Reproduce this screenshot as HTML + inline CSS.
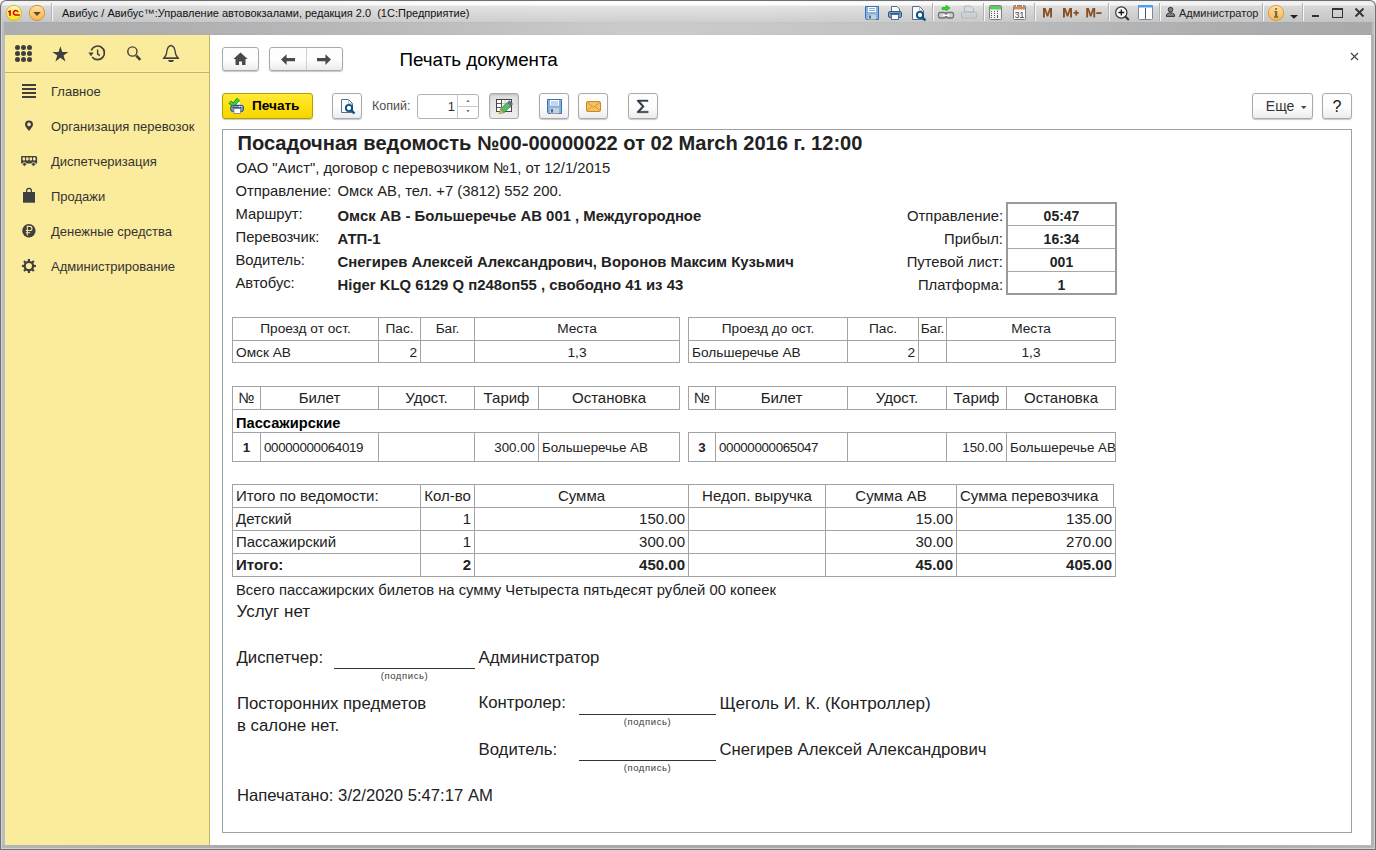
<!DOCTYPE html><html><head><meta charset="utf-8"><style>
*{margin:0;padding:0;box-sizing:border-box}
html,body{width:1376px;height:850px;overflow:hidden;background:#fff}
body{position:relative;font-family:"Liberation Sans",sans-serif;color:#000}
.t{position:absolute;white-space:pre;line-height:1}
.r{position:absolute}
.btn{position:absolute;border:1px solid #a9a9a9;border-radius:3px;background:linear-gradient(#fefefe,#fdfdfd 55%,#ececec);box-shadow:0 1px 1px rgba(0,0,0,0.22)}
</style></head><body><div class="r" style="left:0px;top:0px;width:1376px;height:850px;background:#707070;border-radius:6px 6px 0 0;"></div><div class="r" style="left:1px;top:1px;width:1374px;height:848px;background:#d2d2d4;border-radius:5px 5px 0 0;"></div><div class="r" style="left:2px;top:22px;width:1372px;height:826px;background:#bdbec1;"></div><div class="r" style="left:2px;top:1px;width:1372px;height:21px;border-radius:5px 5px 0 0;background:linear-gradient(90deg,rgba(40,44,54,.06) 0%,rgba(40,44,54,.04) 15%,rgba(0,0,0,0) 40%,rgba(0,0,0,0) 55%,rgba(40,44,54,.03) 70%,rgba(40,44,54,.07) 100%),linear-gradient(#f6f6f6 0px,#ffffff 1px,#ffffff 4px,#e4e4e4 5px,#d9d9d9 13px,#cfcfcf 21px);"></div><div class="r" style="left:4px;top:22px;width:1368px;height:13px;background:linear-gradient(90deg,rgba(40,44,54,.18) 0%,rgba(40,44,54,.17) 12%,rgba(40,44,54,.10) 28%,rgba(0,0,0,0) 45%,rgba(0,0,0,0) 50%,rgba(40,44,54,.05) 66%,rgba(40,44,54,.18) 89%,rgba(40,44,54,.21) 100%),linear-gradient(#c6c6c6 0px,#cbcbcb 2px,#cacaca 12px,#c4c4c4 13px);"></div><div class="r" style="left:1px;top:22px;width:1px;height:827px;background:#d4d4d4;"></div><div class="r" style="left:1374px;top:22px;width:1px;height:827px;background:#d0d0d0;"></div><div class="r" style="left:1px;top:848px;width:1374px;height:1px;background:#d0d0d2;"></div><div class="r" style="left:2px;top:845px;width:1372px;height:3px;background:linear-gradient(90deg,#b4b5b8,#a9aaae 20%,#a9aaae 80%,#b4b5b8);"></div><div class="r" style="left:1371px;top:35px;width:3px;height:810px;background:#b2b3b6;"></div><div class="r" style="left:2px;top:35px;width:3px;height:810px;background:#bcbdc0;"></div><div class="r" style="left:5px;top:35px;width:205px;height:810px;background:#fbeb9c;"></div><div class="r" style="left:209px;top:35px;width:1px;height:810px;background:#c4b466;"></div><div class="r" style="left:210px;top:35px;width:1161px;height:810px;background:#fff;"></div><div class="r" style="left:5px;top:72px;width:204px;height:1px;background:#c4b466;"></div><div class="r" style="left:5px;top:71px;width:204px;height:1px;background:#fdf0a6;"></div><div class="r" style="left:5px;top:73px;width:204px;height:1px;background:#fdf0a6;"></div><div class="t" style="left:51px;top:84.80px;font-size:13px;color:#333;">Главное</div><div class="t" style="left:51px;top:119.80px;font-size:13px;color:#333;">Организация перевозок</div><div class="t" style="left:51px;top:154.80px;font-size:13px;color:#333;">Диспетчеризация</div><div class="t" style="left:51px;top:189.80px;font-size:13px;color:#333;">Продажи</div><div class="t" style="left:51px;top:224.80px;font-size:13px;color:#333;">Денежные средства</div><div class="t" style="left:51px;top:259.80px;font-size:13px;color:#333;">Администрирование</div><div class="t" style="left:62px;top:8.49px;font-size:11px;color:#111;">Авибус / Авибус™:Управление автовокзалами, редакция 2.0  (1С:Предприятие)</div><div class="btn" style="left:222px;top:47px;width:37px;height:24px"></div><div class="btn" style="left:269px;top:47px;width:74px;height:24px"></div><div class="r" style="left:306px;top:48px;width:1px;height:22px;background:#d0d0d0;"></div><div class="t" style="left:399.5px;top:51.39px;font-size:18.8px;">Печать документа</div><div class="btn" style="left:222px;top:93px;width:91px;height:26px;border-color:#b3a000;background:linear-gradient(#ffe83a,#ffe012 50%,#f5d500)"></div><div class="t" style="left:252px;top:99.39px;font-size:13.6px;font-weight:bold;">Печать</div><div class="btn" style="left:332px;top:93px;width:30px;height:26px"></div><div class="t" style="left:372px;top:100.22px;font-size:12.5px;color:#4d4d4d;">Копий:</div><div class="r" style="left:417px;top:94px;width:62px;height:25px;border:1px solid #b4b4b4;border-radius:3px;background:#fff;"></div><div class="r" style="left:457px;top:95px;width:1px;height:23px;background:#c8c8c8;"></div><div class="r" style="left:458px;top:106px;width:20px;height:1px;background:#c8c8c8;"></div><div class="t" style="left:440px;top:100.00px;font-size:13px;color:#333;width:15px;text-align:right;">1</div><div class="btn" style="left:489px;top:93px;width:30px;height:26px;background:linear-gradient(#dcdcdc,#e8e8e8 60%,#efefef);box-shadow:inset 0 1px 2px rgba(0,0,0,.15)"></div><div class="btn" style="left:539px;top:93px;width:30px;height:26px"></div><div class="btn" style="left:578px;top:93px;width:30px;height:26px"></div><div class="btn" style="left:628px;top:93px;width:30px;height:26px"></div><div class="btn" style="left:1252px;top:93px;width:61px;height:26px"></div><div class="t" style="left:1265.8px;top:99.15px;font-size:14px;color:#333;">Еще</div><div class="btn" style="left:1322px;top:93px;width:30px;height:26px"></div><div class="t" style="left:1322px;top:98.66px;font-size:16px;color:#111;width:30px;text-align:center;">?</div><div class="r" style="left:222px;top:129px;width:1130px;height:704px;border:1px solid #a0a0a0;"></div><svg class="r" style="left:0;top:0" width="1376" height="24" viewBox="0 0 1376 24"><defs><linearGradient id="g1c" x1="0" y1="0" x2="0" y2="1"><stop offset="0" stop-color="#fffcc0"/><stop offset="1" stop-color="#ffe000"/></linearGradient><linearGradient id="gor" x1="0" y1="0" x2="0" y2="1"><stop offset="0" stop-color="#ffe0a8"/><stop offset="1" stop-color="#ffb545"/></linearGradient></defs><circle cx="13.9" cy="12.9" r="7.6" fill="url(#g1c)" stroke="#cdb848" stroke-width="1"/><path d="M8 11.2 L10 10.2 L10.9 10.2 L10.9 15.8 L9.2 15.8 L9.2 12 L8 12.4Z" fill="#e00000"/><path d="M18.9 11.6 A3.3 3 0 1 0 15.2 15.8 L19.7 15.8 L19.7 14.3 L15.5 14.3 A1.6 1.5 0 1 1 17.3 12.2Z" fill="#e00000"/><circle cx="37" cy="12.9" r="7.6" fill="url(#gor)" stroke="#c09a40" stroke-width="1"/><path d="M33.2 12 L40.8 12 L37 16Z" fill="#5a4a30"/><rect x="51" y="3" width="1" height="18" fill="#b2b2b2"/><rect x="52" y="3" width="1" height="18" fill="#f8f8f8"/><rect x="932" y="3" width="1" height="18" fill="#b2b2b2"/><rect x="933" y="3" width="1" height="18" fill="#f8f8f8"/><rect x="983" y="3" width="1" height="18" fill="#b2b2b2"/><rect x="984" y="3" width="1" height="18" fill="#f8f8f8"/><rect x="1034" y="3" width="1" height="18" fill="#b2b2b2"/><rect x="1035" y="3" width="1" height="18" fill="#f8f8f8"/><rect x="1108" y="3" width="1" height="18" fill="#b2b2b2"/><rect x="1109" y="3" width="1" height="18" fill="#f8f8f8"/><rect x="1159" y="3" width="1" height="18" fill="#b2b2b2"/><rect x="1160" y="3" width="1" height="18" fill="#f8f8f8"/><rect x="1262" y="3" width="1" height="18" fill="#b2b2b2"/><rect x="1263" y="3" width="1" height="18" fill="#f8f8f8"/><rect x="1302" y="3" width="1" height="18" fill="#b2b2b2"/><rect x="1303" y="3" width="1" height="18" fill="#f8f8f8"/><path d="M865.5 6.5 H878.5 V19.5 H866.5 L865.5 18.5Z" fill="#86b0e6" stroke="#3d6eae"/><rect x="868" y="7" width="8" height="5" fill="#fff"/><rect x="869" y="8" width="6" height="1" fill="#8aa8d0"/><rect x="869" y="10" width="6" height="1" fill="#8aa8d0"/><rect x="868" y="14.5" width="8" height="5" fill="#c8d0d0"/><rect x="869" y="15.5" width="2" height="3" fill="#3d6eae"/><path d="M891.5 6.5 H897 L899.5 9 V12 H891.5Z" fill="#fff" stroke="#5c6e86"/><rect x="888.5" y="11.5" width="13" height="6" rx="1.5" fill="#7aa0d0" stroke="#2e5a8a"/><rect x="890" y="13" width="10" height="1" fill="#2e5a8a"/><rect x="891.5" y="14.5" width="7" height="5" fill="#fff" stroke="#5c6e86"/><path d="M912.5 6.5 H919.5 L923.5 10.5 V19.5 H912.5Z" fill="#fafafa" stroke="#5a7088"/><path d="M919.5 6.5 V10.5 H923.5" fill="none" stroke="#8a9aaa" stroke-width="0.6"/><circle cx="920" cy="15" r="3.1" fill="#fff" stroke="#0b4f84" stroke-width="1.9"/><path d="M922.3 17.4 L925.5 20.5" stroke="#0b4f84" stroke-width="2.4"/><path d="M942 7.5 H946 V5.2 L950 8 L946 10.8 V9.5 H942Z" fill="#22dd22" stroke="#10a010" stroke-width="0.6"/><rect x="938.5" y="12.5" width="7.5" height="5.5" rx="2" fill="none" stroke="#6c7480" stroke-width="1.3"/><rect x="946" y="12.5" width="7.5" height="5.5" rx="2" fill="none" stroke="#6c7480" stroke-width="1.3"/><rect x="943" y="14.6" width="6" height="1.4" fill="#fff"/><path d="M964.5 6 H970.5 L973.5 9 V12 H964.5Z" fill="#d8dade" stroke="#b0b8c4"/><rect x="961.5" y="12" width="15" height="6" rx="2" fill="none" stroke="#b0b8c4" stroke-width="1.2"/><rect x="964" y="14.5" width="10" height="1.5" fill="#c4ccd6"/><rect x="989.5" y="5.5" width="12" height="14" rx="1" fill="#f4f4f4" stroke="#7a8088"/><rect x="990" y="6" width="11" height="3.5" fill="#5ccc5c"/><g fill="#555"><rect x="991" y="11" width="1" height="1"/><rect x="994" y="11" width="1" height="1"/><rect x="991" y="13" width="1" height="1"/><rect x="994" y="13" width="1" height="1"/><rect x="997" y="13" width="1" height="1"/><rect x="991" y="15" width="1" height="1"/><rect x="994" y="15" width="1" height="1"/><rect x="997" y="15" width="1" height="1"/><rect x="991" y="17" width="1" height="1"/><rect x="994" y="17" width="1" height="1"/><rect x="997" y="16" width="1" height="2"/></g><rect x="997" y="10.5" width="1" height="1.5" fill="#e02020"/><rect x="1013.5" y="5.5" width="12" height="14" rx="1" fill="#fafafa" stroke="#7a8088"/><rect x="1014" y="6" width="11" height="3.5" fill="#d08a58"/><rect x="1016" y="4.5" width="1" height="2" fill="#fff"/><rect x="1022" y="4.5" width="1" height="2" fill="#fff"/><text x="1019.5" y="18" font-family="Liberation Sans" font-size="8.5" text-anchor="middle" fill="#333">31</text><path d="M1043 17.6 V8 H1045.6 L1047.5 13.4 L1049.4 8 H1052.0 V17.6 H1050.1 V11 L1048.3 16.4 H1046.7 L1044.9 11 V17.6Z M1063 17.6 V8 H1065.6 L1067.5 13.4 L1069.4 8 H1072.0 V17.6 H1070.1 V11 L1068.3 16.4 H1066.7 L1064.9 11 V17.6Z M1086.2 17.6 V8 H1088.8 L1090.7 13.4 L1092.6 8 H1095.2 V17.6 H1093.3 V11 L1091.5 16.4 H1089.9 L1088.1 11 V17.6Z " fill="#8a5024"/><path d="M1073.6 12.9 H1078.8 M1076.2 10.3 V15.6" stroke="#8a5024" stroke-width="1.8"/><rect x="1096.3" y="12.2" width="5.2" height="1.8" fill="#8a5024"/><circle cx="1121.3" cy="12.5" r="5.6" fill="#fafafa" stroke="#333" stroke-width="1.2"/><path d="M1118.4 12.5 H1124.2 M1121.3 9.6 V15.4" stroke="#111" stroke-width="1.3"/><path d="M1125.3 16.5 L1128.8 20" stroke="#333" stroke-width="2"/><rect x="1138.5" y="5.5" width="14" height="14" rx="1" fill="#fff" stroke="#7a8a9a"/><rect x="1138" y="5" width="15" height="2.5" rx="1" fill="#4aa0f0"/><rect x="1145" y="8" width="1" height="11" fill="#555"/><circle cx="1170.5" cy="9.6" r="2.3" fill="#808080" stroke="#333" stroke-width="1"/><path d="M1166.3 16.4 Q1166.3 12.8 1170.5 12.8 Q1174.7 12.8 1174.7 16.4Z" fill="#808080" stroke="#333" stroke-width="1"/><circle cx="1276" cy="12.9" r="7.6" fill="url(#gor)" stroke="#c9a030" stroke-width="0.9"/><rect x="1275" y="8" width="2.2" height="1.8" rx="0.8" fill="#6a6a60"/><path d="M1274.3 11 H1277.2 V16.2 H1278.2 V17.8 H1274 V16.2 H1275 V12.3 H1274.3Z" fill="#6a6a60"/><path d="M1290 15 H1298 L1294 18.8Z" fill="#222"/><rect x="1312" y="15" width="7" height="2" fill="#333"/><rect x="1332.5" y="8.5" width="10" height="9" fill="none" stroke="#333"/><rect x="1332" y="8" width="11" height="2" fill="#333"/><path d="M1355.5 8.5 L1363.5 16.5 M1363.5 8.5 L1355.5 16.5" stroke="#333" stroke-width="1.8"/></svg><div class="t" style="left:1179px;top:8.19px;font-size:11px;color:#222;">Администратор</div><svg class="r" style="left:5px;top:35px" width="205" height="250" viewBox="5 35 205 250"><g fill="#3f3f3f"><circle cx="17.5" cy="47.5" r="2.5"/><circle cx="17.5" cy="53.5" r="2.5"/><circle cx="17.5" cy="59.5" r="2.5"/><circle cx="23.5" cy="47.5" r="2.5"/><circle cx="23.5" cy="53.5" r="2.5"/><circle cx="23.5" cy="59.5" r="2.5"/><circle cx="29.5" cy="47.5" r="2.5"/><circle cx="29.5" cy="53.5" r="2.5"/><circle cx="29.5" cy="59.5" r="2.5"/><path d="M60.4 46.2 L62.3 51.9 L68.4 51.9 L63.5 55.5 L65.4 61.6 L60.4 57.8 L55.4 61.6 L57.3 55.5 L52.4 51.9 L58.5 51.9Z"/></g><path d="M91.2 50.5 A6.8 6.8 0 1 1 92.2 57" fill="none" stroke="#3f3f3f" stroke-width="1.7"/><path d="M88.4 52.6 L93.6 52.6 L91 56.2Z" fill="#3f3f3f"/><path d="M97.6 49.5 V53.8 L99.8 55.6" fill="none" stroke="#3f3f3f" stroke-width="1.4"/><circle cx="132.4" cy="51.5" r="4.6" fill="none" stroke="#3f3f3f" stroke-width="1.4"/><path d="M136.2 55.6 L140.4 59.9" stroke="#3f3f3f" stroke-width="2.6"/><path d="M170.9 45.5 C167 46 167 50 166.5 53.5 C166 56 164.5 57.5 163.8 58.2 H178.2 C177.5 57.5 176 56 175.5 53.5 C175 50 175 46 170.9 45.5Z" fill="none" stroke="#3f3f3f" stroke-width="1.3"/><rect x="163.3" y="57.6" width="15.4" height="1.4" fill="#3f3f3f"/><path d="M168.2 60 H173.8 A2.8 2 0 0 1 168.2 60Z" fill="#3f3f3f"/><g fill="#3f3f3f"><rect x="22" y="84" width="14" height="2"/><rect x="22" y="88" width="14" height="2"/><rect x="22" y="92" width="14" height="2"/><rect x="22" y="96" width="14" height="2"/></g><path d="M29 120.4 A4 4 0 0 1 33 124.4 C33 126.8 30.5 128.8 29 131 C27.5 128.8 25 126.8 25 124.4 A4 4 0 0 1 29 120.4Z M29 122.6 A1.8 1.8 0 1 0 29.01 122.6Z" fill="#3f3f3f" fill-rule="evenodd"/><path d="M21.6 156 H35.6 A1.5 1.5 0 0 1 37.1 157.5 V163.6 H21.1 V156.5Z" fill="#3f3f3f"/><g fill="#fbeb9c"><rect x="22.6" y="157.3" width="2.5" height="3.2" rx="0.8"/><rect x="26.1" y="157.3" width="2.5" height="3.2" rx="0.8"/><rect x="29.6" y="157.3" width="2.5" height="3.2" rx="0.8"/><rect x="33.1" y="157.3" width="2.5" height="3.2" rx="0.8"/></g><circle cx="24.5" cy="164.3" r="1.9" fill="#3f3f3f" stroke="#fbeb9c" stroke-width="0.8"/><circle cx="33.5" cy="164.3" r="1.9" fill="#3f3f3f" stroke="#fbeb9c" stroke-width="0.8"/><rect x="23" y="192" width="12" height="10.7" fill="#3f3f3f"/><path d="M26.6 194.5 V191 A2.4 2.6 0 0 1 31.4 191 V194.5" fill="none" stroke="#3f3f3f" stroke-width="1.2"/><circle cx="28.9" cy="230.7" r="6.7" fill="#3f3f3f"/><path d="M27.3 235.6 V226.4 H29.9 A2 2 0 0 1 29.9 230.5 H25.8 M25.8 232.7 H30.2" fill="none" stroke="#fbeb9c" stroke-width="1.1"/><g transform="translate(28.9 266)"><circle r="4.2" fill="none" stroke="#3f3f3f" stroke-width="2.2"/><rect x="-1.1" y="-7" width="2.2" height="2.8" fill="#3f3f3f" transform="rotate(0)"/><rect x="-1.1" y="-7" width="2.2" height="2.8" fill="#3f3f3f" transform="rotate(45)"/><rect x="-1.1" y="-7" width="2.2" height="2.8" fill="#3f3f3f" transform="rotate(90)"/><rect x="-1.1" y="-7" width="2.2" height="2.8" fill="#3f3f3f" transform="rotate(135)"/><rect x="-1.1" y="-7" width="2.2" height="2.8" fill="#3f3f3f" transform="rotate(180)"/><rect x="-1.1" y="-7" width="2.2" height="2.8" fill="#3f3f3f" transform="rotate(225)"/><rect x="-1.1" y="-7" width="2.2" height="2.8" fill="#3f3f3f" transform="rotate(270)"/><rect x="-1.1" y="-7" width="2.2" height="2.8" fill="#3f3f3f" transform="rotate(315)"/></g></svg><svg class="r" style="left:210px;top:35px" width="500" height="90" viewBox="210 35 500 90"><path d="M240.5 52.6 L247.6 59 H245.5 V65 H242 V61.5 H239 V65 H235.5 V59 H233.4Z" fill="#4a4a4a"/><path d="M281 59.6 L286.6 54.2 V57.9 H295 V61.3 H286.6 V65 Z" fill="#4a4a4a"/><path d="M331 59.6 L325.4 54.2 V57.9 H317 V61.3 H325.4 V65 Z" fill="#4a4a4a"/><path d="M236 105 V101.3 H239 L240.8 103 V105Z" fill="#fff" stroke="#999" stroke-width="0.5"/><path d="M229.6 101.8 L233.4 105.2 L238.4 99" fill="none" stroke="#177a10" stroke-width="3.6" stroke-linejoin="miter"/><path d="M229.6 101.8 L233.4 105.2 L238.4 99" fill="none" stroke="#46e024" stroke-width="2"/><rect x="230.8" y="105.4" width="12.6" height="6" rx="1.6" fill="#7d9ccc" stroke="#2b4c74"/><rect x="232.3" y="107.2" width="9.5" height="0.9" fill="#2b4c74"/><circle cx="239.6" cy="106.6" r="0.6" fill="#fff"/><circle cx="241.6" cy="106.6" r="0.6" fill="#fff"/><rect x="233.9" y="108.6" width="6.6" height="5" fill="#fff" stroke="#607080" stroke-width="0.7"/><path d="M341.5 99.5 H348.5 L352.5 103.5 V112.5 H341.5Z" fill="#fafafa" stroke="#5a7088"/><path d="M348.5 99.5 V103.5 H352.5" fill="none" stroke="#8a9aaa" stroke-width="0.6"/><circle cx="349" cy="108" r="3.1" fill="#fff" stroke="#0b4f84" stroke-width="1.9"/><path d="M351.3 110.4 L354.5 113.5" stroke="#0b4f84" stroke-width="2.4"/><path d="M466.3 101.8 H469.7 L468 100Z M466.3 110.2 H469.7 L468 112Z" fill="#444"/><rect x="496.5" y="99.5" width="15" height="12" fill="#fff" stroke="#444"/><path d="M497 103.5 H511 M497 107.5 H511 M505 100 V111" stroke="#c4c4c4" stroke-width="1"/><path d="M497 103.5 H502 M497 107.5 H501 M501.5 100 V107" stroke="#555" stroke-width="1"/><path d="M500.3 109 L507.3 102.4 L510.9 106.2 L503.9 112.8Z" fill="#52c062" stroke="#1f6a2a" stroke-width="0.6"/><path d="M507.3 102.4 L509.5 100.3 L513.1 104.1 L510.9 106.2Z" fill="#5e6e80"/><path d="M500.3 109 L499 113.8 L503.9 112.8Z" fill="#e2b468" stroke="#8a6a30" stroke-width="0.4"/><path d="M547.5 99.5 H561.5 V113.5 H548.5 L547.5 112.5Z" fill="#86b0e6" stroke="#3d6eae"/><rect x="550" y="100" width="9" height="5.5" fill="#fff"/><rect x="551" y="101.5" width="7" height="1" fill="#8aa8d0"/><rect x="551" y="103.5" width="7" height="1" fill="#8aa8d0"/><rect x="550" y="108" width="9" height="5.5" fill="#c8d0d0"/><rect x="551" y="109" width="2" height="3.5" fill="#3d6eae"/><rect x="586.5" y="101.5" width="14" height="10" rx="1.2" fill="#f5c060" stroke="#c88a20"/><path d="M587 102 L593.5 107.5 L600 102 M587 111 L591.5 106.5 M600 111 L595.5 106.5" fill="none" stroke="#c88a20" stroke-width="0.8"/><path d="M637.3 100 H648 V101.6 H640 L644.3 106.4 L640 111.2 H648.2 V112.8 H637.1 V111.7 L642 106.4 L637.1 101.1Z" fill="#2a3a4a" stroke="#2a3a4a" stroke-width="0.4"/></svg><svg class="r" style="left:1290px;top:45px" width="75" height="70" viewBox="1290 45 75 70"><path d="M1301 106 H1306.5 L1303.75 109Z" fill="#444"/><path d="M1351 53 L1358 60 M1358 53 L1351 60" stroke="#444" stroke-width="1.2"/></svg><div class="t" style="left:237.5px;top:132.59px;font-size:20.1px;font-weight:bold;color:#222;">Посадочная ведомость №00-00000022 от 02 March 2016 г. 12:00</div><div class="t" style="left:236px;top:161.27px;font-size:14.8px;color:#222;">ОАО &quot;Аист&quot;, договор с перевозчиком №1, от 12/1/2015</div><div class="t" style="left:235.5px;top:183.97px;font-size:14.8px;color:#222;">Отправление:</div><div class="t" style="left:337.5px;top:183.97px;font-size:14.8px;color:#222;">Омск АВ, тел. +7 (3812) 552 200.</div><div class="t" style="left:235.5px;top:206.57px;font-size:14.8px;color:#222;">Маршрут:</div><div class="t" style="left:337.5px;top:208.99px;font-size:14.9px;font-weight:bold;color:#222;">Омск АВ - Большеречье АВ 001 , Междугородное</div><div class="t" style="left:235.5px;top:230.47px;font-size:14.8px;color:#222;">Перевозчик:</div><div class="t" style="left:337.5px;top:232.19px;font-size:14.9px;font-weight:bold;color:#222;">АТП-1</div><div class="t" style="left:235.5px;top:253.37px;font-size:14.8px;color:#222;">Водитель:</div><div class="t" style="left:337.5px;top:254.79px;font-size:14.9px;font-weight:bold;color:#222;">Снегирев Алексей Александрович, Воронов Максим Кузьмич</div><div class="t" style="left:235.5px;top:275.87px;font-size:14.8px;color:#222;">Автобус:</div><div class="t" style="left:337.5px;top:277.89px;font-size:14.9px;font-weight:bold;color:#222;">Higer KLQ 6129 Q п248оп55 , свободно 41 из 43</div><div class="r" style="left:1006px;top:202px;width:111px;height:93px;border:2px solid #9a9a9a;"></div><div class="r" style="left:1008px;top:225px;width:107px;height:1px;background:#a8a8a8;"></div><div class="r" style="left:1008px;top:248px;width:107px;height:1px;background:#a8a8a8;"></div><div class="r" style="left:1008px;top:271px;width:107px;height:1px;background:#a8a8a8;"></div><div class="t" style="left:800px;top:208.77px;font-size:14.8px;color:#222;width:203px;text-align:right;">Отправление:</div><div class="t" style="left:1008px;top:208.75px;font-size:14px;font-weight:bold;color:#222;width:107px;text-align:center;">05:47</div><div class="t" style="left:800px;top:231.77px;font-size:14.8px;color:#222;width:203px;text-align:right;">Прибыл:</div><div class="t" style="left:1008px;top:231.75px;font-size:14px;font-weight:bold;color:#222;width:107px;text-align:center;">16:34</div><div class="t" style="left:800px;top:254.57px;font-size:14.8px;color:#222;width:203px;text-align:right;">Путевой лист:</div><div class="t" style="left:1008px;top:254.55px;font-size:14px;font-weight:bold;color:#222;width:107px;text-align:center;">001</div><div class="t" style="left:800px;top:277.57px;font-size:14.8px;color:#222;width:203px;text-align:right;">Платформа:</div><div class="t" style="left:1008px;top:277.55px;font-size:14px;font-weight:bold;color:#222;width:107px;text-align:center;">1</div><div class="r" style="left:232px;top:317px;width:448px;height:1px;background:#a3a3a3;"></div><div class="r" style="left:232px;top:340px;width:448px;height:1px;background:#a3a3a3;"></div><div class="r" style="left:232px;top:362px;width:448px;height:1px;background:#a3a3a3;"></div><div class="r" style="left:232px;top:317px;width:1px;height:46px;background:#a3a3a3;"></div><div class="r" style="left:378px;top:317px;width:1px;height:46px;background:#a3a3a3;"></div><div class="r" style="left:420px;top:317px;width:1px;height:46px;background:#a3a3a3;"></div><div class="r" style="left:474px;top:317px;width:1px;height:46px;background:#a3a3a3;"></div><div class="r" style="left:679px;top:317px;width:1px;height:46px;background:#a3a3a3;"></div><div class="r" style="left:688px;top:317px;width:428px;height:1px;background:#a3a3a3;"></div><div class="r" style="left:688px;top:340px;width:428px;height:1px;background:#a3a3a3;"></div><div class="r" style="left:688px;top:362px;width:428px;height:1px;background:#a3a3a3;"></div><div class="r" style="left:688px;top:317px;width:1px;height:46px;background:#a3a3a3;"></div><div class="r" style="left:847px;top:317px;width:1px;height:46px;background:#a3a3a3;"></div><div class="r" style="left:918px;top:317px;width:1px;height:46px;background:#a3a3a3;"></div><div class="r" style="left:946px;top:317px;width:1px;height:46px;background:#a3a3a3;"></div><div class="r" style="left:1115px;top:317px;width:1px;height:46px;background:#a3a3a3;"></div><div class="t" style="left:233px;top:322.40px;font-size:13.7px;color:#222;width:145px;text-align:center;">Проезд от ост.</div><div class="t" style="left:379px;top:322.40px;font-size:13.7px;color:#222;width:41px;text-align:center;">Пас.</div><div class="t" style="left:421px;top:322.40px;font-size:13.7px;color:#222;width:53px;text-align:center;">Баг.</div><div class="t" style="left:475px;top:322.40px;font-size:13.7px;color:#222;width:204px;text-align:center;">Места</div><div class="t" style="left:236px;top:346.00px;font-size:13.7px;color:#222;">Омск АВ</div><div class="t" style="left:379px;top:346.00px;font-size:13.7px;color:#222;width:38px;text-align:right;">2</div><div class="t" style="left:475px;top:346.00px;font-size:13.7px;color:#222;width:204px;text-align:center;">1,3</div><div class="t" style="left:689px;top:322.40px;font-size:13.7px;color:#222;width:158px;text-align:center;">Проезд до ост.</div><div class="t" style="left:848px;top:322.40px;font-size:13.7px;color:#222;width:70px;text-align:center;">Пас.</div><div class="t" style="left:919px;top:322.40px;font-size:13.7px;color:#222;width:27px;text-align:center;">Баг.</div><div class="t" style="left:947px;top:322.40px;font-size:13.7px;color:#222;width:168px;text-align:center;">Места</div><div class="t" style="left:692px;top:346.00px;font-size:13.7px;color:#222;">Большеречье АВ</div><div class="t" style="left:848px;top:346.00px;font-size:13.7px;color:#222;width:67px;text-align:right;">2</div><div class="t" style="left:947px;top:346.00px;font-size:13.7px;color:#222;width:168px;text-align:center;">1,3</div><div class="r" style="left:232px;top:386px;width:448px;height:1px;background:#a3a3a3;"></div><div class="r" style="left:232px;top:409px;width:448px;height:1px;background:#a3a3a3;"></div><div class="r" style="left:232px;top:386px;width:1px;height:24px;background:#a3a3a3;"></div><div class="r" style="left:260px;top:386px;width:1px;height:24px;background:#a3a3a3;"></div><div class="r" style="left:378px;top:386px;width:1px;height:24px;background:#a3a3a3;"></div><div class="r" style="left:474px;top:386px;width:1px;height:24px;background:#a3a3a3;"></div><div class="r" style="left:538px;top:386px;width:1px;height:24px;background:#a3a3a3;"></div><div class="r" style="left:679px;top:386px;width:1px;height:24px;background:#a3a3a3;"></div><div class="r" style="left:232px;top:432px;width:448px;height:1px;background:#a3a3a3;"></div><div class="r" style="left:232px;top:461px;width:448px;height:1px;background:#a3a3a3;"></div><div class="r" style="left:232px;top:432px;width:1px;height:30px;background:#a3a3a3;"></div><div class="r" style="left:260px;top:432px;width:1px;height:30px;background:#a3a3a3;"></div><div class="r" style="left:378px;top:432px;width:1px;height:30px;background:#a3a3a3;"></div><div class="r" style="left:474px;top:432px;width:1px;height:30px;background:#a3a3a3;"></div><div class="r" style="left:538px;top:432px;width:1px;height:30px;background:#a3a3a3;"></div><div class="r" style="left:679px;top:432px;width:1px;height:30px;background:#a3a3a3;"></div><div class="t" style="left:233px;top:390.30px;font-size:15px;color:#222;width:27px;text-align:center;">№</div><div class="t" style="left:261px;top:390.30px;font-size:15px;color:#222;width:117px;text-align:center;">Билет</div><div class="t" style="left:379px;top:390.30px;font-size:15px;color:#222;width:95px;text-align:center;">Удост.</div><div class="t" style="left:475px;top:390.30px;font-size:15px;color:#222;width:63px;text-align:center;">Тариф</div><div class="t" style="left:539px;top:390.30px;font-size:15px;color:#222;width:140px;text-align:center;">Остановка</div><div class="r" style="left:688px;top:386px;width:428px;height:1px;background:#a3a3a3;"></div><div class="r" style="left:688px;top:409px;width:428px;height:1px;background:#a3a3a3;"></div><div class="r" style="left:688px;top:386px;width:1px;height:24px;background:#a3a3a3;"></div><div class="r" style="left:715px;top:386px;width:1px;height:24px;background:#a3a3a3;"></div><div class="r" style="left:847px;top:386px;width:1px;height:24px;background:#a3a3a3;"></div><div class="r" style="left:946px;top:386px;width:1px;height:24px;background:#a3a3a3;"></div><div class="r" style="left:1006px;top:386px;width:1px;height:24px;background:#a3a3a3;"></div><div class="r" style="left:1115px;top:386px;width:1px;height:24px;background:#a3a3a3;"></div><div class="r" style="left:688px;top:432px;width:428px;height:1px;background:#a3a3a3;"></div><div class="r" style="left:688px;top:461px;width:428px;height:1px;background:#a3a3a3;"></div><div class="r" style="left:688px;top:432px;width:1px;height:30px;background:#a3a3a3;"></div><div class="r" style="left:715px;top:432px;width:1px;height:30px;background:#a3a3a3;"></div><div class="r" style="left:847px;top:432px;width:1px;height:30px;background:#a3a3a3;"></div><div class="r" style="left:946px;top:432px;width:1px;height:30px;background:#a3a3a3;"></div><div class="r" style="left:1006px;top:432px;width:1px;height:30px;background:#a3a3a3;"></div><div class="r" style="left:1115px;top:432px;width:1px;height:30px;background:#a3a3a3;"></div><div class="t" style="left:689px;top:390.30px;font-size:15px;color:#222;width:26px;text-align:center;">№</div><div class="t" style="left:716px;top:390.30px;font-size:15px;color:#222;width:131px;text-align:center;">Билет</div><div class="t" style="left:848px;top:390.30px;font-size:15px;color:#222;width:98px;text-align:center;">Удост.</div><div class="t" style="left:947px;top:390.30px;font-size:15px;color:#222;width:59px;text-align:center;">Тариф</div><div class="t" style="left:1007px;top:390.30px;font-size:15px;color:#222;width:108px;text-align:center;">Остановка</div><div class="r" style="left:232px;top:409px;width:1px;height:24px;background:#a3a3a3;"></div><div class="t" style="left:236px;top:415.88px;font-size:14.67px;font-weight:bold;">Пассажирские</div><div class="t" style="left:233px;top:440.92px;font-size:13.33px;font-weight:bold;color:#222;width:27px;text-align:center;">1</div><div class="t" style="left:264px;top:440.92px;font-size:13.33px;color:#222;letter-spacing:-0.33px;">00000000064019</div><div class="t" style="left:475px;top:440.92px;font-size:13.33px;color:#222;width:60px;text-align:right;">300.00</div><div class="t" style="left:542px;top:440.92px;font-size:13.33px;color:#222;">Большеречье АВ</div><div class="t" style="left:689px;top:440.92px;font-size:13.33px;font-weight:bold;color:#222;width:26px;text-align:center;">3</div><div class="t" style="left:719px;top:440.92px;font-size:13.33px;color:#222;letter-spacing:-0.33px;">00000000065047</div><div class="t" style="left:947px;top:440.92px;font-size:13.33px;color:#222;width:56px;text-align:right;">150.00</div><div class="t" style="left:1010px;top:440.92px;font-size:13.33px;color:#222;">Большеречье АВ</div><div class="r" style="left:232px;top:484px;width:882px;height:1px;background:#a3a3a3;"></div><div class="r" style="left:232px;top:507px;width:884px;height:1px;background:#a3a3a3;"></div><div class="r" style="left:232px;top:530px;width:884px;height:1px;background:#a3a3a3;"></div><div class="r" style="left:232px;top:553px;width:884px;height:1px;background:#a3a3a3;"></div><div class="r" style="left:232px;top:576px;width:884px;height:1px;background:#a3a3a3;"></div><div class="r" style="left:232px;top:484px;width:1px;height:93px;background:#a3a3a3;"></div><div class="r" style="left:420px;top:484px;width:1px;height:93px;background:#a3a3a3;"></div><div class="r" style="left:474px;top:484px;width:1px;height:93px;background:#a3a3a3;"></div><div class="r" style="left:688px;top:484px;width:1px;height:93px;background:#a3a3a3;"></div><div class="r" style="left:825px;top:484px;width:1px;height:93px;background:#a3a3a3;"></div><div class="r" style="left:956px;top:484px;width:1px;height:93px;background:#a3a3a3;"></div><div class="r" style="left:1113px;top:484px;width:1px;height:24px;background:#a3a3a3;"></div><div class="r" style="left:1115px;top:507px;width:1px;height:70px;background:#a3a3a3;"></div><div class="t" style="left:236px;top:488.40px;font-size:15px;color:#222;">Итого по ведомости:</div><div class="t" style="left:421px;top:488.40px;font-size:15px;color:#222;width:53px;text-align:center;">Кол-во</div><div class="t" style="left:475px;top:488.40px;font-size:15px;color:#222;width:213px;text-align:center;">Сумма</div><div class="t" style="left:689px;top:488.40px;font-size:15px;color:#222;width:136px;text-align:center;">Недоп. выручка</div><div class="t" style="left:826px;top:488.40px;font-size:15px;color:#222;width:130px;text-align:center;">Сумма АВ</div><div class="t" style="left:960px;top:488.40px;font-size:15px;color:#222;">Сумма перевозчика</div><div class="t" style="left:236px;top:511.10px;font-size:15px;color:#222;">Детский</div><div class="t" style="left:421px;top:511.10px;font-size:15px;color:#222;width:50px;text-align:right;">1</div><div class="t" style="left:475px;top:511.10px;font-size:15px;color:#222;width:210px;text-align:right;">150.00</div><div class="t" style="left:826px;top:511.10px;font-size:15px;color:#222;width:127px;text-align:right;">15.00</div><div class="t" style="left:957px;top:511.10px;font-size:15px;color:#222;width:155px;text-align:right;">135.00</div><div class="t" style="left:236px;top:533.80px;font-size:15px;color:#222;">Пассажирский</div><div class="t" style="left:421px;top:533.80px;font-size:15px;color:#222;width:50px;text-align:right;">1</div><div class="t" style="left:475px;top:533.80px;font-size:15px;color:#222;width:210px;text-align:right;">300.00</div><div class="t" style="left:826px;top:533.80px;font-size:15px;color:#222;width:127px;text-align:right;">30.00</div><div class="t" style="left:957px;top:533.80px;font-size:15px;color:#222;width:155px;text-align:right;">270.00</div><div class="t" style="left:236px;top:556.50px;font-size:15px;font-weight:bold;color:#222;">Итого:</div><div class="t" style="left:421px;top:556.50px;font-size:15px;font-weight:bold;color:#222;width:50px;text-align:right;">2</div><div class="t" style="left:475px;top:556.50px;font-size:15px;font-weight:bold;color:#222;width:210px;text-align:right;">450.00</div><div class="t" style="left:826px;top:556.50px;font-size:15px;font-weight:bold;color:#222;width:127px;text-align:right;">45.00</div><div class="t" style="left:957px;top:556.50px;font-size:15px;font-weight:bold;color:#222;width:155px;text-align:right;">405.00</div><div class="t" style="left:236px;top:582.97px;font-size:14.8px;color:#222;">Всего пассажирских билетов на сумму Четыреста пятьдесят рублей 00 копеек</div><div class="t" style="left:236.5px;top:603.11px;font-size:17px;color:#222;">Услуг нет</div><div class="t" style="left:236.5px;top:649.82px;font-size:16.75px;color:#222;">Диспетчер:</div><div class="r" style="left:334px;top:668px;width:141px;height:1px;background:#333;"></div><div class="t" style="left:334px;top:670.96px;font-size:9.5px;color:#3a3a3a;width:141px;text-align:center;letter-spacing:0.6px;">(подпись)</div><div class="t" style="left:478.5px;top:649.82px;font-size:16.75px;color:#222;">Администратор</div><div class="t" style="left:237px;top:695.62px;font-size:16.75px;color:#222;">Посторонних предметов</div><div class="t" style="left:237px;top:718.32px;font-size:16.75px;color:#222;">в салоне нет.</div><div class="t" style="left:478.5px;top:695.22px;font-size:16.75px;color:#222;">Контролер:</div><div class="r" style="left:579px;top:714px;width:137px;height:1px;background:#333;"></div><div class="t" style="left:579px;top:717.46px;font-size:9.5px;color:#3a3a3a;width:137px;text-align:center;letter-spacing:0.6px;">(подпись)</div><div class="t" style="left:719.5px;top:694.92px;font-size:17.1px;color:#222;">Щеголь И. К. (Контроллер)</div><div class="t" style="left:478.5px;top:741.62px;font-size:16.75px;color:#222;">Водитель:</div><div class="r" style="left:579px;top:760px;width:137px;height:1px;background:#333;"></div><div class="t" style="left:579px;top:763.46px;font-size:9.5px;color:#3a3a3a;width:137px;text-align:center;letter-spacing:0.6px;">(подпись)</div><div class="t" style="left:719.5px;top:741.66px;font-size:16.7px;color:#222;">Снегирев Алексей Александрович</div><div class="t" style="left:237px;top:787.78px;font-size:16.68px;color:#222;">Напечатано: 3/2/2020 5:47:17 AM</div></body></html>
